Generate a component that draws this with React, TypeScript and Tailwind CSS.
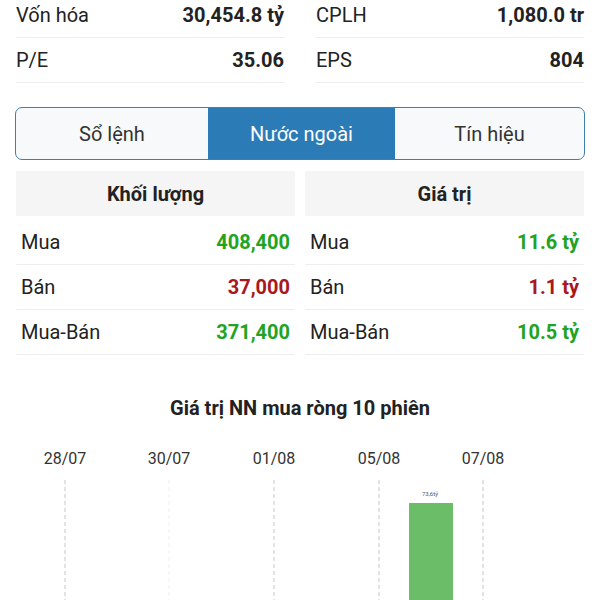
import React from "react";

const font = { fontFamily: "Roboto, 'Noto Sans', sans-serif" };

function InfoRow({ label, value }: { label: string; value: string }) {
  return (
    <div className="flex h-[45px] items-center justify-between border-b border-[#eeeeee]">
      <span className="text-[20px] text-[#222]">{label}</span>
      <span className="text-[20px] font-bold text-[#222]">{value}</span>
    </div>
  );
}

function DataRow({ label, value, color }: { label: string; value: string; color: string }) {
  return (
    <div className="flex h-[45px] items-center justify-between border-b border-[#eeeeee] pl-[5px] pr-[5px]">
      <span className="text-[20px] text-[#222]">{label}</span>
      <span className={`text-[20px] font-bold ${color}`}>{value}</span>
    </div>
  );
}

const GREEN = "text-[#22a322]";
const RED = "text-[#a8181e]";

export default function App() {
  const dates = [
    { x: 65, t: "28/07", o: 0.55 },
    { x: 169, t: "30/07", o: 0.15 },
    { x: 274, t: "01/08", o: 0.55 },
    { x: 379, t: "05/08", o: 0.55 },
    { x: 483, t: "07/08", o: 0.55 },
  ];
  return (
    <div className="h-[600px] w-[600px] overflow-hidden bg-white" style={font}>
      <div className="-mt-[7px] grid grid-cols-2 gap-x-[32px] px-4">
        <div>
          <InfoRow label="Vốn hóa" value="30,454.8 tỷ" />
          <InfoRow label="P/E" value="35.06" />
        </div>
        <div>
          <InfoRow label="CPLH" value="1,080.0 tr" />
          <InfoRow label="EPS" value="804" />
        </div>
      </div>

      <div className="mx-[15px] mt-[24px] flex h-[53px] overflow-hidden rounded-[7px] border-[1.5px] border-[#3f7ead] bg-[#f7f9fa]">
        <div className="flex w-[192px] items-center justify-center text-[20px] text-[#333]">Sổ lệnh</div>
        <div className="flex w-[187px] items-center justify-center bg-[#2b7bb6] text-[20px] text-white">Nước ngoài</div>
        <div className="flex flex-1 items-center justify-center text-[20px] text-[#333]">Tín hiệu</div>
      </div>

      <div className="mt-[11px] grid grid-cols-2 gap-x-[10px] px-4">
        <div>
          <div className="mb-[4px] flex h-[45px] items-center justify-center bg-[#f5f5f5] text-[20px] font-bold text-[#222]">Khối lượng</div>
          <DataRow label="Mua" value="408,400" color={GREEN} />
          <DataRow label="Bán" value="37,000" color={RED} />
          <DataRow label="Mua-Bán" value="371,400" color={GREEN} />
        </div>
        <div>
          <div className="mb-[4px] flex h-[45px] items-center justify-center bg-[#f5f5f5] text-[20px] font-bold text-[#222]">Giá trị</div>
          <DataRow label="Mua" value="11.6 tỷ" color={GREEN} />
          <DataRow label="Bán" value="1.1 tỷ" color={RED} />
          <DataRow label="Mua-Bán" value="10.5 tỷ" color={GREEN} />
        </div>
      </div>

      <div className="mt-[38px] text-center text-[20px] font-bold text-[#222]">Giá trị NN mua ròng 10 phiên</div>

      <svg width="600" height="200" className="mt-[12px] block">
        {dates.map((d) => (
          <g key={d.t}>
            <text x={d.x} y={29} textAnchor="middle" fontSize="16" fill="#333" fontFamily="Roboto, sans-serif">
              {d.t}
            </text>
            <line x1={d.x} y1={45} x2={d.x} y2={200} stroke="#999" strokeOpacity={d.o} strokeDasharray="4 3" strokeWidth="1" />
          </g>
        ))}
        <text x={430} y={61} textAnchor="middle" fontSize="6" fill="#555" fontFamily="Roboto, sans-serif">73,6tỷ</text>
        <rect x={409} y={68} width={44} height={132} fill="#6cbd68" />
      </svg>
    </div>
  );
}
